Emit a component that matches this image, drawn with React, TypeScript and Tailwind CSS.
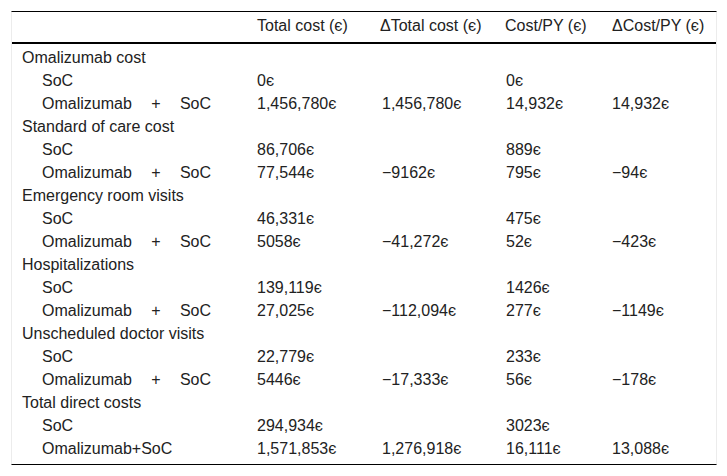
const groups = [
  {
    label: "Omalizumab cost",
    soc: ["0є", "", "0є", ""],
    oma: ["1,456,780є", "1,456,780є", "14,932є", "14,932є"],
  },
  {
    label: "Standard of care cost",
    soc: ["86,706є", "", "889є", ""],
    oma: ["77,544є", "−9162є", "795є", "−94є"],
  },
  {
    label: "Emergency room visits",
    soc: ["46,331є", "", "475є", ""],
    oma: ["5058є", "−41,272є", "52є", "−423є"],
  },
  {
    label: "Hospitalizations",
    soc: ["139,119є", "", "1426є", ""],
    oma: ["27,025є", "−112,094є", "277є", "−1149є"],
  },
  {
    label: "Unscheduled doctor visits",
    soc: ["22,779є", "", "233є", ""],
    oma: ["5446є", "−17,333є", "56є", "−178є"],
  },
  {
    label: "Total direct costs",
    soc: ["294,934є", "", "3023є", ""],
    oma: ["1,571,853є", "1,276,918є", "16,111є", "13,088є"],
    joined: true,
  },
];

const cols = "grid grid-cols-[235px_125px_124px_106px_115px]";

function Cells({ values }: { values: string[] }) {
  return (
    <>
      {values.map((v, i) => (
        <div key={i} className="pl-[10px] whitespace-nowrap">
          {v}
        </div>
      ))}
    </>
  );
}

export default function App() {
  return (
    <div className="w-[727px] h-[476px] bg-white pt-[11px] pl-[11px] font-['Liberation_Sans',Arial,sans-serif] text-[16px] text-[#222]">
      <div className="w-[706px] border-t border-b border-t-black border-b-black border-x border-x-[#ececec]">
        {/* header */}
        <div className={`${cols} leading-[23px] pt-[2px] pb-[5px] border-b-2 border-black`}>
          <div />
          <div className="pl-[10px] whitespace-nowrap">Total cost (є)</div>
          <div className="pl-[8px] whitespace-nowrap">ΔTotal cost (є)</div>
          <div className="pl-[9px] whitespace-nowrap">Cost/PY (є)</div>
          <div className="pl-[10px] whitespace-nowrap">ΔCost/PY (є)</div>
        </div>

        {/* body */}
        <div className="pt-[2px] pb-[4px] leading-[23px]">
          {groups.map((g) => (
            <div key={g.label}>
              <div className={cols}>
                <div className="pl-[10px] whitespace-nowrap">{g.label}</div>
              </div>
              <div className={cols}>
                <div className="pl-[30px]">SoC</div>
                <Cells values={g.soc} />
              </div>
              <div className={cols}>
                <div className="pl-[30px]">
                  {g.joined ? (
                    "Omalizumab+SoC"
                  ) : (
                    <div className="flex justify-between w-[169px]">
                      <span>Omalizumab</span>
                      <span>+</span>
                      <span>SoC</span>
                    </div>
                  )}
                </div>
                <Cells values={g.oma} />
              </div>
            </div>
          ))}
        </div>
      </div>
    </div>
  );
}
